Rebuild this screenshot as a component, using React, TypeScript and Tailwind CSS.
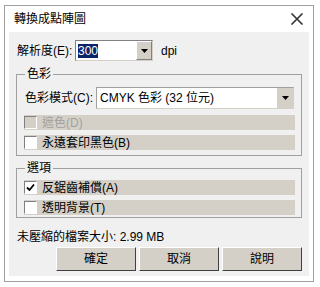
import React from "react";

const FONT = { fontFamily: '"Liberation Sans", "Noto Sans CJK TC", sans-serif' };

function Triangle() {
  return (
    <svg width="7" height="4" viewBox="0 0 7 4">
      <polygon points="0,0 7,0 3.5,4" fill="#000" />
    </svg>
  );
}

function Check({ checked, disabled }: { checked?: boolean; disabled?: boolean }) {
  return (
    <div
      className={`w-[13px] h-[13px] shrink-0 border border-t-[#808080] border-l-[#808080] border-r-[#ffffff] border-b-[#ffffff] flex items-center justify-center ${
        disabled ? "bg-[#d4d0c8]" : "bg-white"
      }`}
    >
      {checked && (
        <svg width="9" height="9" viewBox="0 0 9 9">
          <path d="M1 4.5 L3.5 7 L8 1.5" stroke="#000" strokeWidth="1.8" fill="none" />
        </svg>
      )}
    </div>
  );
}

function Band({ label, checked, disabled }: { label: string; checked?: boolean; disabled?: boolean }) {
  return (
    <div className="h-[15px] bg-[#d4d0c8] flex items-center">
      <Check checked={checked} disabled={disabled} />
      <span className={`ml-[5px] leading-[14px] ${disabled ? "text-[#a0a0a0]" : "text-black"}`}>{label}</span>
    </div>
  );
}

function Button({ label }: { label: string }) {
  return (
    <div className="w-[80px] h-[24px] bg-[#d4d0c8] border border-t-white border-l-white border-r-[#404040] border-b-[#404040] flex items-center justify-center">
      {label}
    </div>
  );
}

export default function App() {
  return (
    <div className="w-[320px] h-[287px] bg-white pt-[5px] pl-[4px] text-[12px] text-black" style={FONT}>
      <div className="w-[310px] h-[277px] border border-[#a0a0a0] flex flex-col">
        <div className="h-[26px] shrink-0 flex items-center justify-between pl-[9px] pr-[9px]">
          <span className="leading-[14px] text-[12px]">轉換成點陣圖</span>
          <svg width="14" height="12" viewBox="0 0 14 12">
            <path d="M1.5 0.5 L12.5 11.5 M12.5 0.5 L1.5 11.5" stroke="#333" strokeWidth="1.6" />
          </svg>
        </div>
        <div className="mx-[4px] h-[244px] bg-[#f0f0f0] flex flex-col">
          {/* resolution row */}
          <div className="mt-[8px] pl-[8px] flex items-center h-[21px]">
            <span className="w-[58px] leading-[14px]">解析度(E):</span>
            <div className="w-[78px] h-[21px] bg-white border border-t-[#808080] border-l-[#808080] border-r-[#d4d0c8] border-b-[#d4d0c8] flex items-center pl-[2px]">
              <span className="bg-[#0a246a] text-white leading-[14px] px-[0px]">300</span>
              <div className="flex-1" />
              <div className="w-[16px] h-[19px] bg-[#d4d0c8] border border-t-white border-l-white border-r-[#808080] border-b-[#808080] flex items-center justify-center">
                <Triangle />
              </div>
            </div>
            <span className="ml-[8px] leading-[14px]">dpi</span>
          </div>

          {/* color group */}
          <fieldset className="mt-[6px] ml-[7px] w-[286px] border border-[#a0a0a0] pl-[7px] pr-[6px] pb-[5px]">
            <legend className="ml-[1px] px-[2px] leading-[14px]">色彩</legend>
            <div className="mt-[6px] flex items-center h-[22px]">
              <span className="pl-[1px] w-[72px] leading-[14px]">色彩模式(C):</span>
              <div className="w-[198px] h-[22px] bg-white border border-t-[#a0a0a0] border-l-[#a0a0a0] border-r-[#d4d0c8] border-b-[#d4d0c8] flex items-center pl-[3px]">
                <span className="leading-[14px]">CMYK 色彩 (32 位元)</span>
                <div className="flex-1" />
                <div className="w-[16px] h-[20px] bg-[#d4d0c8] flex items-center justify-center">
                  <Triangle />
                </div>
              </div>
            </div>
            <div className="mt-[6px] flex flex-col gap-[5px]">
              <Band label="遮色(D)" disabled />
              <Band label="永遠套印黑色(B)" />
            </div>
          </fieldset>

          {/* options group */}
          <fieldset className="mt-[5px] ml-[7px] w-[286px] border border-[#a0a0a0] pl-[7px] pr-[6px] pb-[2px]">
            <legend className="ml-[1px] px-[2px] leading-[14px]">選項</legend>
            <div className="mt-[5px] flex flex-col gap-[5px]">
              <Band label="反鋸齒補償(A)" checked />
              <Band label="透明背景(T)" />
            </div>
          </fieldset>

          <div className="mt-[12px] pl-[8px] leading-[14px]">未壓縮的檔案大小: 2.99 MB</div>

          <div className="mt-[3px] pl-[47px] flex gap-[3px]">
            <Button label="確定" />
            <Button label="取消" />
            <Button label="說明" />
          </div>
        </div>
      </div>
    </div>
  );
}
